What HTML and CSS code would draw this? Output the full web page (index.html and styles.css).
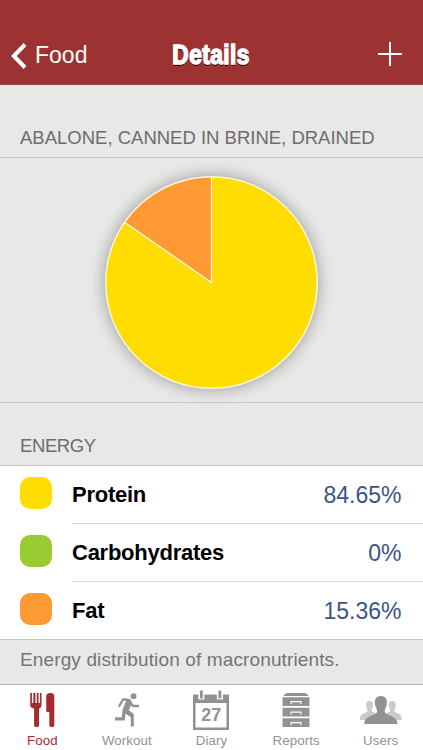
FILE: index.html
```html
<!DOCTYPE html>
<html lang="en">
<head>
    <meta charset="UTF-8">
    <meta name="viewport" content="width=device-width, initial-scale=1.0">
    <title>Food Details</title>
    <link rel="stylesheet" href="styles.css">
</head>
<body>
    <div class="app">
        <header class="navbar">
            <a class="navbar__back">
                <svg class="navbar__chevron" viewBox="0 0 16 26"><path d="M14 1.5 2.8 13 14 24.5" /></svg>
                <span>Food</span>
            </a>
            <h1 class="navbar__title">Details</h1>
            <div class="navbar__action">
                <svg class="navbar__plus" viewBox="0 0 24 24"><path d="M12 0v24M0 12h24" /></svg>
            </div>
        </header>

        <main class="content">
            <h2 class="section-title section-title--product"><span>ABALONE, CANNED IN BRINE, DRAINED</span></h2>
            <div class="chart">
                <svg class="chart__pie" viewBox="0 0 213 213">
                    <circle cx="106.5" cy="106.5" r="105.7" fill="#fd0" />
                    <path d="M106.5 106.5V.8A105.7 105.7 0 0 0 19.6 46.3Z" fill="#ff9933" />
                </svg>
            </div>

            <h2 class="section-title section-title--energy"><span>ENERGY</span></h2>
            <ul class="list">
                <li class="row">
                    <i class="swatch swatch--protein"></i>
                    <div class="row__body"><span class="row__label">Protein</span><span class="row__value">84.65%</span></div>
                </li>
                <li class="row">
                    <i class="swatch swatch--carbs"></i>
                    <div class="row__body"><span class="row__label">Carbohydrates</span><span class="row__value">0%</span></div>
                </li>
                <li class="row">
                    <i class="swatch swatch--fat"></i>
                    <div class="row__body"><span class="row__label">Fat</span><span class="row__value">15.36%</span></div>
                </li>
            </ul>
            <p class="note">Energy distribution of macronutrients.</p>
        </main>

        <nav class="tabbar">
            <a class="tab tab--active">
                <svg class="tab__icon" viewBox="0 0 44 44">
                    <path d="M10.2 5h1.7v10h1.4V5h2.1v10h1.4V5h1.7v10h1.4V5h1.6v12.5q0 2-2.4 3.3v16.4q0 1.800-1.500 1.800h-2q-1.500 0-1.500-1.800V20.8q-3.900-1.300-3.900-3.300z" />
                    <path d="M26.200 8.500Q26.200 5 30 5h.7q3.600 0 3.600 4v28.200q0 1.800-1.800 1.800h-1.400q-1.800 0-1.800-1.800V24h-1.600q-1.500 0-1.500-1.500z" />
                </svg>
                <span>Food</span>
            </a>
            <a class="tab">
                <svg class="tab__icon" viewBox="0 0 44 44">
                    <circle cx="28.600" cy="8.200" r="2.900" />
                    <path class="stroke" d="M13.800 18.700 18 11.400 24 12 28 18H34" stroke-width="2.300" />
                    <path d="M18 10.300 25.200 11 26.900 15.300 23.900 22.200 28.800 26.200 28.800 38.400H25.800V29.200L20.600 25.600 19.800 32.400H10V29.300H16.700L17.700 21.500 21 13.200Z" />
                </svg>
                <span>Workout</span>
            </a>
            <a class="tab">
                <svg class="tab__icon" viewBox="0 0 44 44">
                    <path fill-rule="evenodd" d="M4 6.500h36V42H4zM6.500 15v24.500h31V15z" />
                    <path fill="#fff" d="M9.300 5h6v6.500h-6zM27.900 5h6v6.500h-6z" />
                    <path d="M10.900 2.500h2.900v8h-2.900zM29.400 2.500h2.900v8h-2.900z" />
                    <text class="tab__date" x="22.300" y="33.300">27</text>
                </svg>
                <span>Diary</span>
            </a>
            <a class="tab">
                <svg class="tab__icon" viewBox="0 0 44 44">
                    <path d="M13 5h18q2 0 3.500 3H9.500Q11 5 13 5zM8.500 9.200h27V18h-27zM8.500 19.800h27v8.700h-27zM8.500 30.300h27V39h-27z" />
                    <path d="M17 16v-2.300h10V16M17 26.500v-2.300h10v2.300M17 37v-2.300h10V37" fill="none" stroke="#fff" stroke-width="1.200" />
                </svg>
                <span>Reports</span>
            </a>
            <a class="tab">
                <svg class="tab__icon" viewBox="0 0 44 44">
                    <g fill="#cacaca">
                        <path id="side-user" d="M10.500 13c2.500 0 3.700 1.800 3.500 4.300-.1 2.500-1.500 3.500-1.400 5.200.1 2.500 5.900 1.700 5.900 5.500V32H.9c0-8.500 7.500-5.800 7.500-9.500 0-1.700-1.300-2.700-1.400-5.200C6.800 14.800 8 13 10.500 13z" />
                        <use href="#side-user" transform="matrix(-1 0 0 1 43.800 0)" />
                    </g>
                    <path d="M21.900 8c4.400 0 6.300 3 6 7.400-.2 3.400-2 5-2.200 7.600-.3 5.700 12.500 3 12.800 13H5.300c.3-10 13.100-7.300 12.800-13-.2-2.600-2-4.200-2.200-7.600C15.600 11 17.500 8 21.900 8z" />
                </svg>
                <span>Users</span>
            </a>
        </nav>
    </div>
</body>
</html>
```
FILE: styles.css
```css
*, *::before, *::after {
    box-sizing: border-box;
}
body {
    margin: 0;
    font-family: "Liberation Sans", Arial, sans-serif;
    background: #e8e8e6;
}
h1, h2, p, ul { margin: 0; padding: 0; font-weight: normal; }
.app {
    display: flex;
    flex-direction: column;
    width: 423px;
    height: 750px;
    overflow: hidden;
}

/* top bar */
.navbar {
    display: grid;
    grid-template-columns: 1fr auto 1fr;
    align-items: center;
    height: 85px;
    padding: 26px 21px 0 11px;
    background: #9d3232;
    border-bottom: 1px solid #8e4a4a;
    color: #fff;
}
.navbar__back {
    display: flex;
    align-items: center;
    gap: 8px;
    font-size: 23px;
}
.navbar__back span { padding-top: 1px; }
.navbar__chevron {
    width: 16px;
    height: 26px;
    margin-top: 2px;
    fill: none;
    stroke: #fff;
    stroke-width: 4;
}
.navbar__title {
    font-size: 27px;
    font-weight: bold;
    line-height: 30px;
    letter-spacing: 0.5px;
    margin: -1px 0 0 10px;
    transform: scaleX(0.84);
    -webkit-text-stroke: 1.5px #fff;
    text-shadow: 0 1.5px 0 #301010;
}
.navbar__action { display: flex; justify-content: flex-end; margin-top: -3px; }
.navbar__plus {
    width: 24px;
    height: 24px;
    stroke: #fff;
    stroke-width: 2;
}

/* content */
.content { flex: 1; }
.section-title {
    display: flex;
    align-items: flex-end;
    padding: 0 20px 8px;
    font-size: 18.5px;
    line-height: 22px;
    color: #6d6d70;
    border-bottom: 1px solid #c8c8c8;
    white-space: nowrap;
}
.section-title--product { height: 73px; }
.section-title--energy { height: 63px; letter-spacing: -0.4px; }
.chart {
    display: flex;
    justify-content: center;
    align-items: center;
    height: 245px;
    border-bottom: 1px solid #c8c8c8;
}
.chart__pie {
    width: 213px;
    height: 213px;
    margin-bottom: -5px;
    stroke: #fff8dc;
    stroke-width: 1.3;
    border-radius: 50%;
    box-shadow: 0 0 16px rgba(0, 0, 0, 0.35);
}
.list {
    list-style: none;
    background: #fff;
    border-bottom: 1px solid #c8c8c8;
}
.row {
    display: flex;
    align-items: center;
    height: 58px;
    padding-left: 20px;
}
.row:last-child { height: 57px; }
.swatch {
    width: 32px;
    height: 32px;
    margin: -4px 20px 0 0;
    border-radius: 10px;
}
.row:last-child .swatch { margin-top: -3px; }
.swatch--protein { background: #fd0; }
.swatch--carbs { background: #9c3; }
.swatch--fat { background: #f93; }
.row__body {
    display: flex;
    flex: 1;
    align-items: center;
    justify-content: space-between;
    height: 100%;
    padding-right: 21.5px;
    border-bottom: 1px solid #d9d9dc;
}
.row:last-child .row__body { border-bottom: 0; }
.row__label {
    font-size: 22px;
    font-weight: bold;
    letter-spacing: -0.25px;
    color: #000;
}
.row__value {
    padding-top: 1px;
    font-size: 23px;
    color: #3b5488;
}
.note {
    padding: 9px 20px;
    font-size: 19px;
    line-height: 22px;
    letter-spacing: 0.13px;
    color: #747477;
}

/* bottom tabs */
.tabbar {
    display: flex;
    height: 66px;
    background: #fff;
    border-top: 1px solid #b2b2b2;
}
.tab {
    display: flex;
    flex: 1;
    flex-direction: column;
    align-items: center;
    padding-top: 3px;
    font-size: 13.3px;
    line-height: 17px;
    letter-spacing: 0.1px;
    color: #929292;
    fill: #929292;
}
.tab--active { color: #a62b30; fill: #a62b30; }
.tab__icon { flex: none; width: 44px; height: 44px; }
.tab__icon .stroke { fill: none; stroke: #929292; }
.tab__date {
    font-size: 18px;
    font-weight: bold;
    text-anchor: middle;
}
```
